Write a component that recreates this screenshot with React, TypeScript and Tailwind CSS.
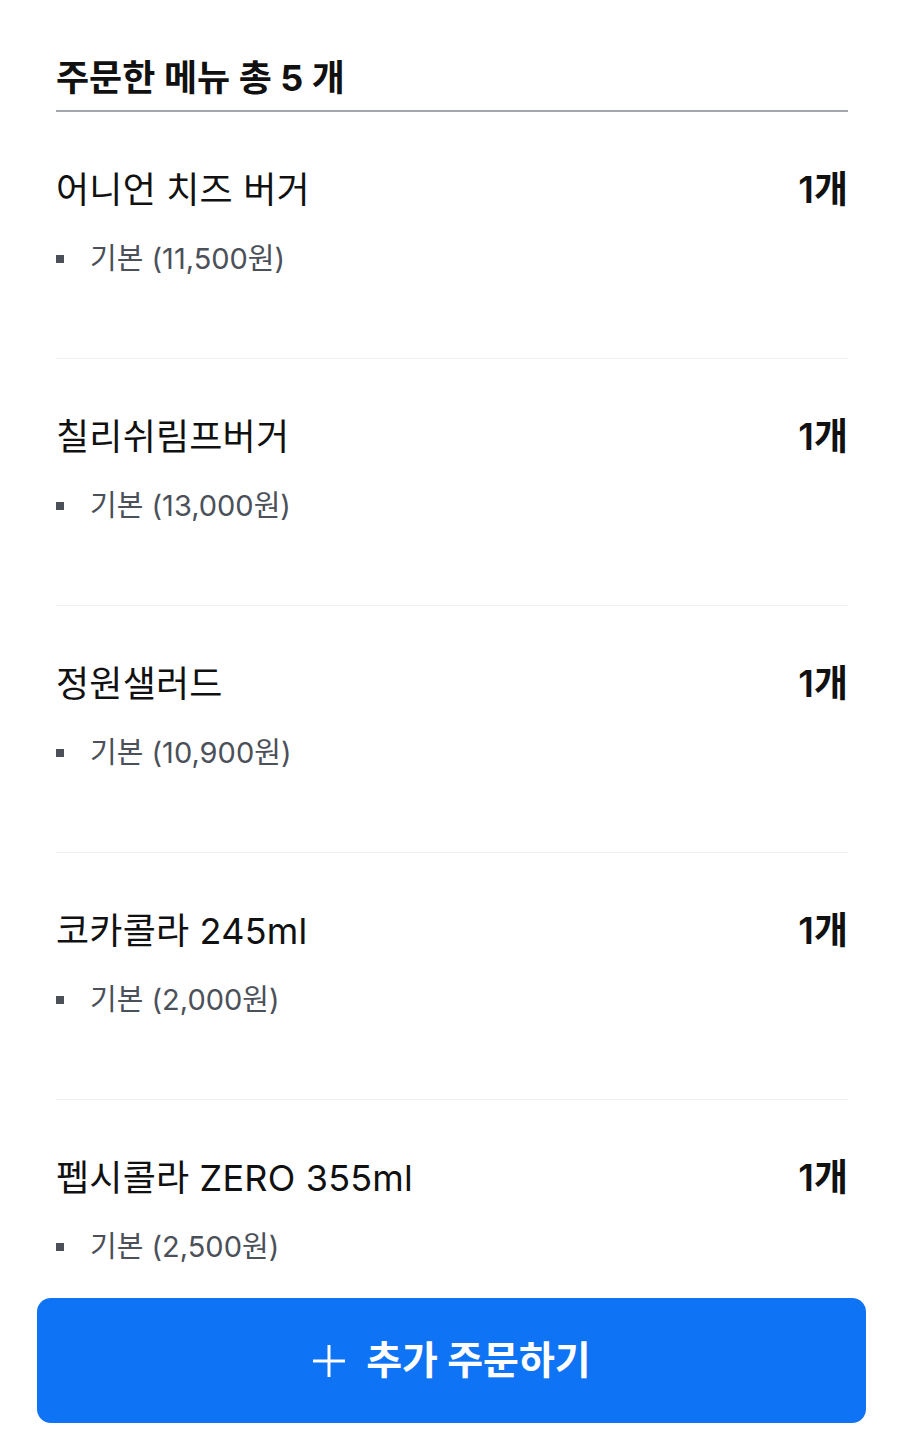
import React from 'react';

interface OrderItem {
  id: number;
  name: string;
  option: string;
  price: string;
  qty: number;
}

const items: OrderItem[] = [
  { id: 1, name: '어니언 치즈 버거', option: '기본', price: '11,500원', qty: 1 },
  { id: 2, name: '칠리쉬림프버거', option: '기본', price: '13,000원', qty: 1 },
  { id: 3, name: '정원샐러드', option: '기본', price: '10,900원', qty: 1 },
  { id: 4, name: '코카콜라 245ml', option: '기본', price: '2,000원', qty: 1 },
  { id: 5, name: '펩시콜라 ZERO 355ml', option: '기본', price: '2,500원', qty: 1 },
];

const App: React.FC = () => {
  return (
    <div
      className="min-h-screen bg-white"
      style={{ fontFamily: 'Inter, "Noto Sans CJK KR", "Noto Sans", sans-serif' }}
    >
      <div className="pl-14 pr-[52px]">
        {/* 헤더 */}
        <div className="pt-[58px] pb-3 border-b-2 border-[#a3a6ad]">
          <h1 className="text-[36px] leading-[40px] font-bold text-[#111111]">
            주문한 메뉴 총 {items.length} 개
          </h1>
        </div>

        {/* 메뉴 목록 */}
        <div className="divide-y divide-[#f0f1f3]">
          {items.map((item, idx) => (
            <div
              key={item.id}
              className={idx === items.length - 1 ? 'pt-[56px] pb-[33px]' : 'pt-[56px] pb-[81px]'}
            >
              <div className="flex items-center justify-between">
                <div className="text-[36px] leading-[44px] text-[#111111] tracking-[0.2px]">{item.name}</div>
                <div className="text-[37px] leading-[44px] font-semibold text-[#111111]">{item.qty}개</div>
              </div>
              <div className="mt-[29px] flex items-center h-9">
                <span className="w-2 h-2 bg-[#4b5059] mr-[26px]" />
                <span className="text-[29px] leading-9 text-[#4b5059]">
                  {item.option} ({item.price})
                </span>
              </div>
            </div>
          ))}
        </div>
      </div>

      {/* 추가 주문 버튼 */}
      <div className="pl-[37px] pr-[34px]">
        <button className="w-full h-[125px] rounded-[14px] bg-[#0f73f5] flex items-center justify-center gap-5 text-white">
          <svg width="34" height="34" viewBox="0 0 34 34" fill="none" stroke="currentColor" strokeWidth="3">
            <path d="M17 1v32M1 17h32" />
          </svg>
          <span className="text-[39px] font-bold">추가 주문하기</span>
        </button>
      </div>
    </div>
  );
};

export default App;
